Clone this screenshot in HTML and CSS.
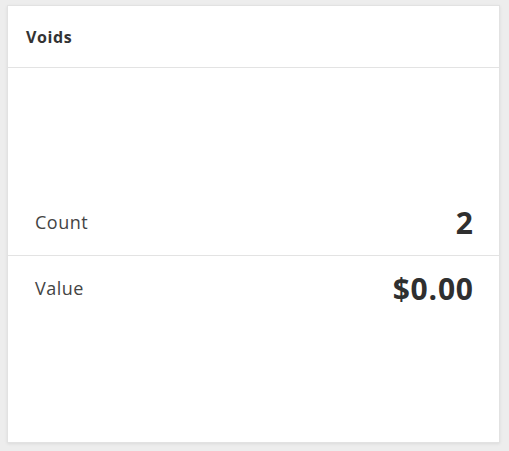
FILE: index.html
```html
<!DOCTYPE html>
<html>
<head>
<meta charset="utf-8">
<link rel="stylesheet" href="styles.css">
</head>
<body>
<div class="card">
  <div class="card-header">Voids</div>
  <div class="card-body">
    <div class="rows">
      <div class="row">
        <span class="label">Count</span>
        <span class="value">2</span>
      </div>
      <div class="row">
        <span class="label">Value</span>
        <span class="value">$0.00</span>
      </div>
    </div>
  </div>
</div>
</body>
</html>
```
FILE: styles.css
```css
html, body {
  margin: 0;
  padding: 0;
  background: #ededed;
}
body {
  padding: 5px 9px 8px 7px;
  height: 451px;
  box-sizing: border-box;
  font-family: "Open Sans", "Noto Sans", sans-serif;
  color: #333;
}
.card {
  height: 438px;
  box-sizing: border-box;
  background: #fff;
  border: 1px solid #e2e2e2;
  box-shadow: 0 1px 3px rgba(0,0,0,0.08);
  display: flex;
  flex-direction: column;
}
.card-header {
  height: 62px;
  box-sizing: border-box;
  border-bottom: 1px solid #e3e3e3;
  padding-left: 18px;
  display: flex;
  align-items: center;
  font-size: 16px;
  font-weight: 700;
  letter-spacing: 0.6px;
  color: #333;
}
.card-body {
  flex: 1;
  display: flex;
  flex-direction: column;
  justify-content: center;
}
.rows {
  display: flex;
  flex-direction: column;
}
.row {
  height: 65px;
  display: flex;
  align-items: center;
  justify-content: space-between;
  padding: 0 26px 0 27px;
}
.row + .row {
  border-top: 1px solid #e3e3e3;
}
.label {
  font-size: 18px;
  letter-spacing: 0.5px;
  color: #444;
}
.value {
  font-size: 30px;
  font-weight: 700;
  letter-spacing: 0.8px;
  margin-right: -0.8px;
  color: #2f2f2f;
}
```
